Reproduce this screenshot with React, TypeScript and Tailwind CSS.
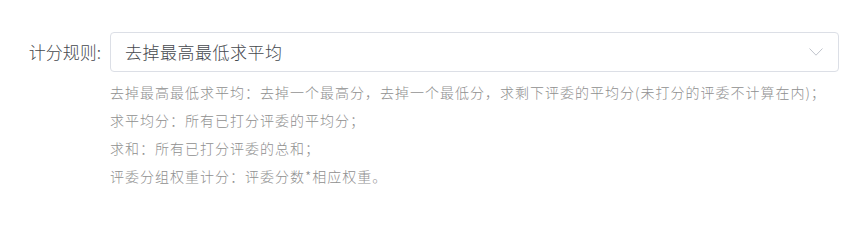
const HELP_LINES = [
  '去掉最高最低求平均：去掉一个最高分，去掉一个最低分，求剩下评委的平均分(未打分的评委不计算在内)；',
  '求平均分：所有已打分评委的平均分；',
  '求和：所有已打分评委的总和；',
  '评委分组权重计分：评委分数*相应权重。',
];

function Chevron() {
  return (
    <svg width="14" height="8" viewBox="0 0 14 8" fill="none" className="text-[#c0c4cc]">
      <path d="M0.5 0.5 L7 7.2 L13.5 0.5" stroke="currentColor" strokeWidth="1" />
    </svg>
  );
}

export default function App() {
  return (
    <div
      className="w-[860px] h-[222px] bg-white pt-[32px] font-light"
      style={{ fontFamily: '"Noto Sans CJK SC", "Noto Sans", sans-serif' }}
    >
      {/* Form item */}
      <div className="flex">
        <label className="w-[110px] shrink-0 h-[40px] flex items-center justify-end pr-[9px] text-[17px] text-[#45484d]">
          计分规则:
        </label>
        <div className="flex flex-col">
          <div className="w-[729px] h-[40px] border border-[#dcdfe6] rounded-[4px] flex items-center justify-between pl-[14px] pr-[15px]">
            <span className="text-[17px] tracking-[0.5px] text-[#45484d]">去掉最高最低求平均</span>
            <Chevron />
          </div>
          {/* Help text */}
          <div className="mt-[6px] flex flex-col">
            {HELP_LINES.map((line) => (
              <div key={line} className="h-[28px] leading-[28px] text-[14px] tracking-[1px] text-[#8f8f8f]">
                {line}
              </div>
            ))}
          </div>
        </div>
      </div>
    </div>
  );
}
